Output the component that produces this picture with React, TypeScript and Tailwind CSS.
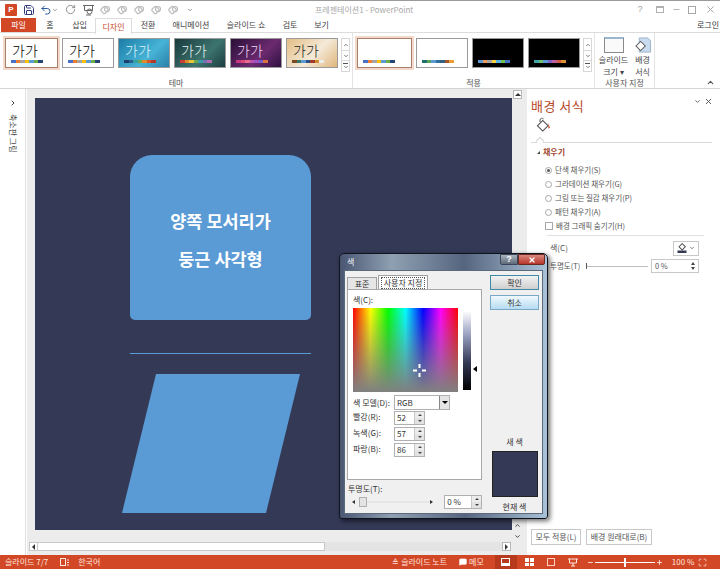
import type { ReactNode } from "react";
import { ChevronDown, ChevronRight, ChevronUp, Maximize, MessageSquare, Minus, Plus, RotateCw, Save, Undo2, X } from "lucide-react";

const KOR = "font-['Noto_Sans_CJK_KR','Noto_Sans',sans-serif]";

const TABS = [
  { label: "홈", w: "w-[28px]" },
  { label: "삽입", w: "w-[31px]" },
  { label: "디자인", w: "w-[37px]", active: true },
  { label: "전환", w: "w-[32px]" },
  { label: "애니메이션", w: "w-[54px]" },
  { label: "슬라이드 쇼", w: "w-[56px]" },
  { label: "검토", w: "w-[32px]" },
  { label: "보기", w: "w-[31px]" },
];

const OFFICE = ["#4472c4", "#ed7d31", "#a5a5a5", "#ffc000", "#5b9bd5", "#70ad47", "#264478"];
const WARM = ["#1f6f6f", "#5aa55a", "#5b9bd5", "#2f6f9f", "#34607f", "#a5552a", "#ed9c31"];

type ThemeThumb = {
  bg: string;
  ink: string;
  colors: string[];
  ring?: string;
  label?: boolean;
};

const THEMES: ThemeThumb[] = [
  { bg: "bg-white", ink: "text-black", colors: OFFICE, ring: "border-[#a8806a] outline-[#f3d9cb]", label: true },
  { bg: "bg-white", ink: "text-black", colors: OFFICE, label: true },
  { bg: "bg-[linear-gradient(135deg,#1d7ea8,#47b3d6_60%,#2a80a8)]", ink: "text-[#d8f2fa]", colors: ["#1c3f6b", "#2a5f90", "#37a0a0", "#6aa84f", "#e08a2e", "#d9542b", "#b03a2e"], label: true },
  { bg: "bg-[linear-gradient(135deg,#1a3a3c,#3c7470_60%,#1d3d40)]", ink: "text-[#e6f2ee]", colors: ["#c9402f", "#e08a2e", "#e7c53a", "#6aa84f", "#3d9aa8", "#7a6fb5", "#b06ab0"], label: true },
  { bg: "bg-[linear-gradient(135deg,#2a1038,#6c2a70_60%,#2d1240)]", ink: "text-[#efd8f0]", colors: ["#c8387f", "#d9487a", "#e66a8a", "#c050b0", "#9a50c0", "#7060c8", "#e07040"], label: true },
  { bg: "bg-[linear-gradient(135deg,#e3bd86,#f4ead8_55%,#e0b67c)]", ink: "text-[#222]", colors: ["#7a4a20", "#3a7a6a", "#5b9bd5", "#2f4f7f", "#a03a2a", "#d08a30", "#eeeeee"], label: true },
];

const VARIANTS: ThemeThumb[] = [
  { bg: "bg-white", ink: "text-black", colors: OFFICE, ring: "border-[#a8806a] outline-[#f3d9cb]" },
  { bg: "bg-white", ink: "text-black", colors: WARM },
  { bg: "bg-black", ink: "text-white", colors: ["#5b9bd5", "#ed9c5a", "#a5a5a5", "#ffd040", "#5bb0e5", "#70c050", "#4472c4"] },
  { bg: "bg-black", ink: "text-white", colors: ["#3fa5a5", "#70c070", "#5b9bd5", "#8060c0", "#c060a0", "#d05a3a", "#e09030"] },
];

function Thumb({ t, w }: { t: ThemeThumb; w: string }) {
  const border = t.ring ? `border outline-2 ${t.ring}` : "border border-[#9a9a9a]";
  return (
    <div className={`${w} h-[30px] shrink-0 flex flex-col justify-end items-center pb-[4px] relative ${t.bg} ${border}`}>
      {t.label && (
        <span className={`self-start ml-[6px] text-[14px] font-light leading-[15px] mb-[2px] ${t.ink}`}>가가</span>
      )}
      <div className="flex self-start ml-[5px]">
        {t.colors.map((c, i) => (
          <div key={i} className="w-[4.5px] h-[3px]" style={{ backgroundColor: c }} />
        ))}
      </div>
    </div>
  );
}

function GalleryScroll() {
  return (
    <div className="w-[9px] h-[34px] ml-[-1px] border border-[#d8d8d8] flex flex-col items-center text-[#555]">
      <div className="h-[11px] flex items-center"><ChevronUp size={6} strokeWidth={3} /></div>
      <div className="h-[11px] w-full border-y border-[#d8d8d8] flex items-center justify-center"><ChevronDown size={6} strokeWidth={3} /></div>
      <div className="h-[10px] flex flex-col items-center justify-center">
        <div className="w-[5px] h-px bg-[#555] mb-px" />
        <ChevronDown size={6} strokeWidth={3} className="-my-[1px]" />
      </div>
    </div>
  );
}

function RibbonGroup({ label, w, children }: { label: string; w: string; children: ReactNode }) {
  return (
    <div className={`${w} shrink-0 h-full flex flex-col border-r border-[#e4e4e4]`}>
      <div className="h-[45px] flex items-start pt-[5px]">{children}</div>
      <div className="text-center text-[8px] leading-[10px] text-[#555]">{label}</div>
    </div>
  );
}

function TitleBar() {
  return (
    <div className="h-[18px] shrink-0 flex items-center border-t border-[#9a9a9a] relative">
      <div className="w-[12px] h-[12px] ml-[5px] bg-[#d24726] rounded-[1px] flex items-center justify-center text-white text-[8px] font-bold leading-none font-['Liberation_Sans',sans-serif]">P</div>
      <Save size={12} className="ml-[6px] text-[#2f3a78]" strokeWidth={2} />
      <Undo2 size={12} className="ml-[5px] text-[#2a5a9a]" strokeWidth={2} />
      <ChevronDown size={6} className="text-[#777]" strokeWidth={3} />
      <RotateCw size={11} className="ml-[7px] text-[#888]" />
      <svg width="13" height="12" viewBox="0 0 13 12" className="ml-[6px] text-[#666]" fill="none" stroke="currentColor">
        <path d="M1 1.5h11M2.5 1.5v5h8v-5" />
        <circle cx="7.5" cy="7.5" r="2.5" />
        <path d="M4 11h5" />
      </svg>
      <div className="flex ml-[5px] gap-[6px]">
        {[0, 1, 2, 3, 4].map((i) => (
          <svg key={i} width="11" height="11" viewBox="0 0 11 11" fill="none" stroke="#bdbdbd" strokeWidth="1.2">
            <rect x="1.5" y="3" width="6" height="6" rx="1.5" transform="rotate(-40 4.5 6)" />
            <circle cx="7" cy="5" r="2.5" />
          </svg>
        ))}
      </div>
      <ChevronDown size={6} className="ml-[8px] text-[#777]" strokeWidth={3} />
      <span className="ml-[122px] text-[8px] text-[#a8a8a8] leading-none">프레젠테이션1 - PowerPoint</span>
      <div className="ml-auto flex items-center text-[#a0a0a0]">
        <span className="w-[10px] text-center text-[9px] leading-none font-['Liberation_Sans',sans-serif]">?</span>
        <div className="ml-[11px] w-[8px] h-[7px] border border-[#b0b0b0] border-t-2" />
        <Minus size={9} className="ml-[8px]" />
        <div className="ml-[7px] w-[8px] h-[8px] border border-[#a8a8a8]" />
        <X size={11} className="ml-[9px] mr-[4px]" />
      </div>
    </div>
  );
}

function TabRow() {
  return (
    <div className="h-[15px] shrink-0 flex pl-px border-b border-[#dcdcdc] relative text-[8px] leading-none text-[#444]">
      <div className="w-[35px] bg-[#d24726] text-white flex items-center justify-center">파일</div>
      {TABS.map((t) => (
        <div
          key={t.label}
          className={`${t.w} flex items-center justify-center ${t.active ? "bg-white border border-b-0 border-[#dcdcdc] text-[#c5472a] h-[16px]" : ""}`}
        >
          {t.label}
        </div>
      ))}
      <span className="ml-auto mr-px self-center text-[#333]">로그인</span>
    </div>
  );
}

function Ribbon() {
  return (
    <div className="h-[56px] shrink-0 flex border-b border-[#d4d4d4]">
      <RibbonGroup label="테마" w="w-[353px]">
        <div className="flex items-start gap-[4px] pl-[5px]">
          {THEMES.map((t, i) => (
            <Thumb key={i} t={t} w={i === 0 ? "w-[53px]" : "w-[52px]"} />
          ))}
          <GalleryScroll />
        </div>
      </RibbonGroup>
      <RibbonGroup label="적용" w="w-[242px]">
        <div className="flex items-start gap-[4px] pl-[4px]">
          {VARIANTS.map((t, i) => (
            <Thumb key={i} t={t} w={i === 0 ? "w-[55px]" : "w-[52px]"} />
          ))}
          <GalleryScroll />
        </div>
      </RibbonGroup>
      <RibbonGroup label="사용자 지정" w="w-[60px]">
        <div className="flex w-full -mt-[1px] text-[8px] leading-[12px] text-[#444] text-center">
          <div className="w-[37px] flex flex-col items-center">
            <div className="w-[20px] h-[16px] border border-[#8a8a8a] border-t-[2px] border-t-[#9ab6d0] bg-[#fafafa]" />
            <span className="mt-[1px]">슬라이드<br />크기 ▾</span>
          </div>
          <div className="w-[21px] flex flex-col items-center">
            <svg width="18" height="17" viewBox="0 0 18 18">
              <path d="M5 1h9l3 3v12H5z" fill="#c9dcef" stroke="#9ab0c6" />
              <rect x="3" y="6" width="7" height="7" transform="rotate(45 6.5 9.5)" fill="#fff" stroke="#555" />
            </svg>
            <span>배경<br />서식</span>
          </div>
        </div>
      </RibbonGroup>
      <div className="flex-1 flex items-end justify-end pr-[5px] pb-[1px]">
        <ChevronUp size={9} strokeWidth={3} className="text-[#555]" />
      </div>
    </div>
  );
}

function Slide() {
  return (
    <div className="w-[477px] h-[432px] shrink-0 bg-[#343956] relative">
      <div className="absolute left-[95px] top-[57px] w-[181px] h-[165px] pt-[5px] bg-[#5b9bd5] rounded-t-[22px] rounded-b-[5px] flex flex-col items-center justify-center gap-[14px] text-white font-bold text-[17.5px] leading-[24px]">
        <span>양쪽 모서리가</span>
        <span>둥근 사각형</span>
      </div>
      <div className="absolute left-[95px] top-[255px] w-[181px] h-px bg-[#5b9bd5]" />
      <svg className="absolute left-[87px] top-[276px]" width="178" height="139" viewBox="0 0 178 139">
        <polygon points="34,0 178,0 144,139 0,139" fill="#5b9bd5" />
      </svg>
    </div>
  );
}

function CenterPane() {
  return (
    <div className="w-[500px] shrink-0 h-full bg-[#ececec] flex flex-col">
      <div className="flex flex-1 min-h-0 pl-[8px]">
        <div className="pt-[9px]">
          <Slide />
        </div>
        <div className="w-[9px] ml-px flex flex-col items-center">
          <div className="w-[9px] h-[9px] mt-px bg-white border border-[#b8b8b8] flex items-center justify-center">
            <div className="w-0 h-0 border-x-[3px] border-x-transparent border-b-[3px] border-b-[#333]" />
          </div>
          <div className="mt-auto mb-[2px] flex flex-col items-center gap-[4px]">
            <ChevronUp size={7} strokeWidth={3} className="text-[#333]" />
            <ChevronDown size={7} strokeWidth={3} className="text-[#333]" />
          </div>
        </div>
      </div>
      <div className="h-[9px] mb-[4px] ml-[2px] w-[482px] flex items-stretch">
        <div className="w-[9px] bg-white border border-[#c8c8c8] flex items-center justify-center">
          <div className="w-0 h-0 border-y-[3px] border-y-transparent border-r-[3px] border-r-[#333]" />
        </div>
        <div className="w-[287px] bg-white border border-[#c8c8c8] border-l-0" />
        <div className="flex-1 bg-[#e4e4e4]" />
        <div className="w-[9px] bg-white border border-[#b8b8b8] flex items-center justify-center">
          <div className="w-0 h-0 border-y-[3px] border-y-transparent border-l-[3px] border-l-[#333]" />
        </div>
      </div>
    </div>
  );
}

function Radio({ label, on }: { label: string; on?: boolean }) {
  return (
    <div className="h-[14px] flex items-center">
      <div className="w-[7px] h-[7px] rounded-full border border-[#a8a8a8] flex items-center justify-center">
        {on && <div className="w-[3px] h-[3px] rounded-full bg-[#555]" />}
      </div>
      <span className="ml-[3px] text-[7.5px] leading-none text-[#555]">{label}</span>
    </div>
  );
}

function FormatPanel() {
  return (
    <div className="flex-1 h-full bg-white flex flex-col pl-[4px] pr-[8px] text-[#555]">
      <div className="h-[26px] flex items-start justify-between">
        <span className="text-[13px] leading-[18px] mt-[8px] text-[#b5492a] tracking-[0.5px]">배경 서식</span>
        <div className="flex items-center mt-[8px] text-[#555]">
          <ChevronDown size={7} strokeWidth={3} />
          <X size={9} strokeWidth={2.5} className="ml-[3px] -mr-px" />
        </div>
      </div>
      <svg width="16" height="16" viewBox="0 0 16 16" className="ml-[5px] mt-[2px]" fill="none">
        <rect x="3" y="5" width="7.5" height="7.5" transform="rotate(45 6.75 8.75)" stroke="#555" strokeWidth="1.1" />
        <path d="M4 5V3a2 2 0 0 1 3.5-1" stroke="#555" />
        <path d="M12 6l2 5-1.5.5z" fill="#d24726" />
      </svg>
      <div className="mt-[3px] h-[7px] relative">
        <div className="h-px bg-[#d8d8d8] mt-[6px]" />
        <div className="absolute left-[6px] top-[2px] w-[6px] h-[6px] bg-white border-l border-t border-[#d0d0d0] rotate-45" />
      </div>
      <div className="h-[14px] mt-[2px] flex items-center pl-[6px] text-[8px] font-bold leading-none text-[#a0492f]">
        <div className="w-0 h-0 border-l-[3px] border-l-transparent border-b-[3px] border-b-[#444] mr-[3px]" />
        채우기
      </div>
      <div className="mt-[4px] pl-[14px]">
        <Radio on label="단색 채우기(S)" />
        <Radio label="그라데이션 채우기(G)" />
        <Radio label="그림 또는 질감 채우기(P)" />
        <Radio label="패턴 채우기(A)" />
        <div className="h-[14px] flex items-center">
          <div className="w-[8px] h-[8px] border border-[#a8a8a8]" />
          <span className="ml-[3px] text-[7.5px] leading-none">배경 그래픽 숨기기(H)</span>
        </div>
      </div>
      <div className="ml-[16px] mr-[8px] h-px bg-[#e0e0e0] mt-[2px]" />
      <div className="h-[16px] mt-[4px] flex items-center pl-[19px] text-[8px] leading-none">
        색(C)
        <div className="ml-auto mr-[13px] w-[26px] h-[15px] border border-[#c8c8c8] flex items-center justify-center gap-[2px]">
          <svg width="10" height="10" viewBox="0 0 10 10" fill="none">
            <rect x="3" y="1.5" width="4.5" height="4.5" transform="rotate(45 5.2 3.7)" stroke="#555" />
            <rect x="0.5" y="7.5" width="9" height="2.5" fill="#343956" />
          </svg>
          <ChevronDown size={6} strokeWidth={3} />
        </div>
      </div>
      <div className="h-[14px] mt-[3px] flex items-center pl-[19px] text-[7.5px] leading-none">
        <span className="w-[36px] shrink-0 whitespace-nowrap">투명도(T)</span>
        <div className="w-px h-[6px] bg-[#555]" />
        <div className="w-[61px] h-px bg-[#bdbdbd]" />
        <div className="ml-[3px] w-[48px] shrink-0 h-[14px] border border-[#c8c8c8] flex items-center justify-between px-[3px]">
          <span>0 %</span>
          <div className="flex flex-col gap-[2px]">
            <div className="w-0 h-0 border-x-[2px] border-x-transparent border-b-[3px] border-b-[#444]" />
            <div className="w-0 h-0 border-x-[2px] border-x-transparent border-t-[3px] border-t-[#444]" />
          </div>
        </div>
      </div>
      <div className="mt-auto mb-[10px] flex gap-[5px] text-[8px] leading-none">
        <div className="w-[50px] h-[16px] border border-[#c8c8c8] flex items-center justify-center">모두 적용(L)</div>
        <div className="w-[66px] h-[16px] border border-[#c8c8c8] flex items-center justify-center">배경 원래대로(B)</div>
      </div>
    </div>
  );
}

function StatusBar() {
  return (
    <div className="h-[14px] shrink-0 bg-[#d24726] flex items-center text-[8px] leading-none text-[#ffe6de]">
      <span className="ml-[5px]">슬라이드 7/7</span>
      <svg width="10" height="9" viewBox="0 0 10 9" className="ml-[12px]" fill="none" stroke="#ffe6de">
        <rect x="0.5" y="0.5" width="5" height="7" />
        <path d="M7 2h2M7 4.5h2M7 7h2" />
      </svg>
      <span className="ml-[8px]">한국어</span>
      <span className="ml-[292px]">≙ 슬라이드 노트</span>
      <MessageSquare size={8} fill="#fff" stroke="#fff" className="ml-[12px]" />
      <span className="ml-[2px]">메모</span>
      <div className="ml-[11px] w-[22px] h-[14px] bg-[#b83a1c] flex items-center justify-center">
        <div className="w-[9px] h-[8px] border border-white border-b-[3px]" />
      </div>
      <div className="ml-[8px] w-[9px] h-[8px] grid grid-cols-2 gap-[1px]">
        {[0, 1, 2, 3].map((i) => <div key={i} className="bg-white" />)}
      </div>
      <div className="ml-[13px] w-[8px] h-[8px] border border-[#ffd0c0] grid grid-cols-2" />
      <svg width="10" height="9" viewBox="0 0 10 9" className="ml-[13px]" fill="none" stroke="#ffe6de">
        <path d="M0 1h10M1.5 1v4h7V1M5 5v3M3 8h4" />
      </svg>
      <Minus size={7} strokeWidth={3} className="ml-[9px]" />
      <div className="w-[60px] h-px bg-white relative mx-[1px]">
        <div className="absolute left-[29px] -top-[4px] w-[2px] h-[9px] bg-white" />
      </div>
      <Plus size={7} strokeWidth={3} />
      <span className="ml-[9px] whitespace-nowrap">100 %</span>
      <Maximize size={9} className="ml-[4px]" />
    </div>
  );
}

function UpDown() {
  return (
    <div className="w-[10px] h-full border-l border-[#c8c8c8] flex flex-col">
      <div className="flex-1 bg-[#ececec] flex items-center justify-center">
        <div className="w-0 h-0 border-x-[2px] border-x-transparent border-b-[2px] border-b-[#444]" />
      </div>
      <div className="flex-1 bg-[#e2e2e2] flex items-center justify-center">
        <div className="w-0 h-0 border-x-[2px] border-x-transparent border-t-[2px] border-t-[#444]" />
      </div>
    </div>
  );
}

function ValueRow({ label, value }: { label: string; value: string }) {
  return (
    <div className="h-[16px] flex items-center">
      <span className="w-[41px] -mt-[3px]">{label}</span>
      <div className="w-[31px] h-[14px] border border-[#b0b0b0] flex items-center justify-between pl-[2px]">
        <span>{value}</span>
        <UpDown />
      </div>
    </div>
  );
}

function ColorDialog() {
  return (
    <div className="absolute left-[339px] top-[253px] w-[209px] h-[266px] rounded-t-[5px] rounded-b-[3px] border border-[#10141f] shadow-[2px_2px_5px_rgba(0,0,0,0.6)] bg-[linear-gradient(90deg,#4a5672,#8fa0b2_25%,#56657f_60%,#a9c2d8)] flex flex-col px-[4px] pb-[4px] text-[8px] leading-none text-[#333]">
      <div className="h-[16px] shrink-0 flex items-start">
        <span className="mt-[4px] ml-[3px] text-[#eef2f6]">색</span>
        <div className="ml-auto -mr-[2px] flex">
          <div className="w-[18px] h-[11px] rounded-bl-[2px] border border-[#3c4658] bg-[linear-gradient(#a8b2bc,#5f6a78)] text-white text-center font-bold text-[9px] leading-[9px] font-['Liberation_Sans',sans-serif]">?</div>
          <div className="w-[27px] h-[11px] rounded-br-[2px] border border-[#6a2a22] bg-[linear-gradient(#d9877c,#b8352a)] flex items-center justify-center">
            <X size={8} strokeWidth={4} className="text-white" />
          </div>
        </div>
      </div>
      <div className="flex-1 bg-[#f0f0f0] border border-[#5a6a7a] flex pl-[2px] pt-[5px] pr-[3px]">
        <div className="w-[135px] shrink-0 flex flex-col">
          <div className="h-[14px] flex items-end -mt-px">
            <div className="w-[30px] h-[12px] border border-b-0 border-[#a0a0a0] bg-[#e6e6e6] flex items-center justify-center">표준</div>
            <div className="ml-px w-[50px] h-[14px] border border-b-0 border-[#a0a0a0] bg-white flex items-center justify-center">
              <span className="border border-dotted border-[#555] px-[2px] py-px">사용자 지정</span>
            </div>
          </div>
          <div className="h-[191px] bg-white border border-[#a8a8a8] px-[5px] pt-[6px]">
            <div className="h-[12px]">색(C):</div>
            <div className="flex">
              <div className="w-[105px] h-[84px] shrink-0 relative bg-[linear-gradient(to_bottom,rgba(128,128,128,0),rgba(128,128,128,1)),linear-gradient(to_right,#f00,#ff0,#0f0,#0ff,#00f,#f0f,#f00)]">
                <svg className="absolute left-[60px] top-[56px]" width="13" height="13" viewBox="0 0 13 13" stroke="#fff" strokeWidth="2">
                  <path d="M6.5 0v4M6.5 9v4M0 6.5h4M9 6.5h4" />
                </svg>
              </div>
              <div className="w-[8px] h-[79px] shrink-0 ml-[5px] mt-[3px] bg-[linear-gradient(to_bottom,#fff,#9aa0c0_30%,#343956_65%,#000)]" />
              <div className="w-0 h-0 mt-[58px] ml-[2px] border-y-[3px] border-y-transparent border-r-[4px] border-r-black" />
            </div>
            <div className="h-[15px] mt-[3px] flex items-center">
              <span className="w-[41px]">색 모델(D):</span>
              <div className="w-[56px] h-[15px] border border-[#b0b0b0] flex items-center justify-between pl-[2px]">
                RGB
                <div className="w-[10px] h-full bg-[#e4e4e4] border-l border-[#888] flex items-center justify-center">
                  <div className="w-0 h-0 border-x-[3px] border-x-transparent border-t-[3px] border-t-black" />
                </div>
              </div>
            </div>
            <ValueRow label="빨강(R):" value="52" />
            <ValueRow label="녹색(G):" value="57" />
            <ValueRow label="파랑(B):" value="86" />
          </div>
          <div className="mt-[5px] ml-px">투명도(T):</div>
          <div className="mt-[2px] h-[14px] flex items-center">
            <div className="ml-[5px] w-0 h-0 border-y-[2px] border-y-transparent border-r-[3px] border-r-[#333]" />
            <div className="ml-[4px] w-[8px] h-[10px] border border-[#b0b0b0] bg-[#e4e4e4]" />
            <div className="w-[66px] h-[2px] bg-[#e6e6e6]" />
            <div className="w-0 h-0 border-y-[2px] border-y-transparent border-l-[3px] border-l-[#333]" />
            <div className="ml-[11px] w-[39px] h-[14px] bg-white border border-[#b0b0b0] flex items-center justify-between pl-[2px]">
              0 %
              <UpDown />
            </div>
          </div>
        </div>
        <div className="ml-[8px] w-[49px] flex flex-col items-center">
          <div className="w-full h-[15px] -mt-px border border-[#3f8aa8] bg-[linear-gradient(#f2f2f2,#cfcfcf)] flex items-center justify-center">확인</div>
          <div className="w-full h-[15px] mt-[5px] border border-[#7aa8c8] bg-[linear-gradient(#f0f8fd,#b6dcf2)] flex items-center justify-center">취소</div>
          <span className="mt-[128px]">새 색</span>
          <div className="w-[46px] h-[46px] mt-[5px] shrink-0 bg-[#343956] border border-[#222]" />
          <span className="mt-[6px]">현재 색</span>
        </div>
      </div>
    </div>
  );
}

export default function App() {
  return (
    <div className={`w-[720px] h-[569px] relative overflow-hidden bg-white flex flex-col ${KOR}`}>
      <TitleBar />
      <TabRow />
      <Ribbon />
      <div className="flex-1 min-h-0 flex">
        <div className="w-[26px] shrink-0 border-r border-[#e0e0e0] flex flex-col items-center pt-[10px] text-[#444]">
          <ChevronRight size={8} strokeWidth={3} />
          <span className="mt-[7px] text-[8px] leading-none [writing-mode:vertical-rl] [text-orientation:sideways]">축소판 그림</span>
        </div>
        <div className="w-px shrink-0" />
        <CenterPane />
        <FormatPanel />
      </div>
      <StatusBar />
      <ColorDialog />
    </div>
  );
}
